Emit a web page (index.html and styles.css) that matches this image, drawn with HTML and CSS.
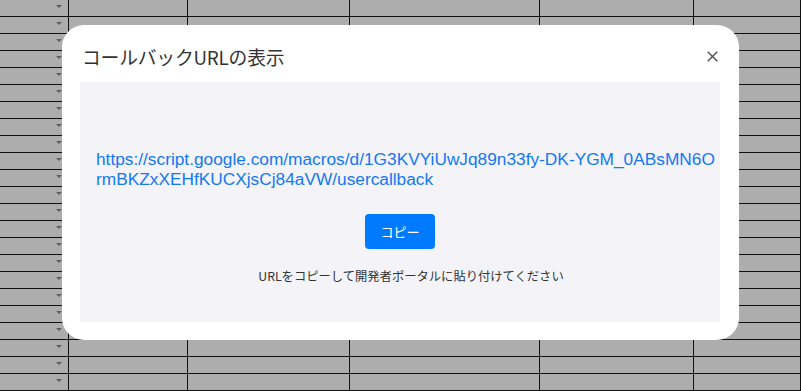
FILE: index.html
```html
<!DOCTYPE html>
<html lang="ja">
<head>
<meta charset="utf-8">
<link rel="stylesheet" href="styles.css">
</head>
<body>
<div class="sheet" id="sheet"></div>
<div class="dialog">
  <div class="dialog-header">
    <h1 class="dialog-title">コールバックURLの表示</h1>
    <button class="close" aria-label="閉じる">
      <svg width="11" height="11" viewBox="0 0 11 11"><path d="M0.7 0.7L10.3 10.3M10.3 0.7L0.7 10.3" stroke="#555" stroke-width="1.5" fill="none"/></svg>
    </button>
  </div>
  <div class="panel">
    <a class="url" href="#">https://script.google.com/macros/d/1G3KVYiUwJq89n33fy-DK-YGM_0ABsMN6OrmBKZxXEHfKUCXjsCj84aVW/usercallback</a>
    <button class="copy">コピー</button>
    <p class="hint">URLをコピーして開発者ポータルに貼り付けてください</p>
  </div>
</div>
<script src="script.js"></script>
</body>
</html>
```
FILE: script.js
```js
var s = document.getElementById('sheet');
var html = '';
for (var r = 0; r < 23; r++) {
  html += '<div class="cell first"><span class="tri"></span></div>';
  for (var c = 0; c < 5; c++) html += '<div class="cell"></div>';
}
s.innerHTML = html;
```
FILE: styles.css
```css
html, body { margin: 0; padding: 0; }
body {
  width: 801px;
  height: 391px;
  overflow: hidden;
  background: #adadad;
  position: relative;
  font-family: "Noto Sans CJK JP", "Liberation Sans", sans-serif;
}
.sheet {
  display: grid;
  grid-template-columns: 69px 119px 162px 190px 154px 1fr;
  grid-auto-rows: 17px;
}
.cell {
  border-right: 1px solid #111;
  border-bottom: 1px solid #111;
  box-sizing: border-box;
  background: #adadad;
}
.cell.first {
  display: flex;
  justify-content: flex-end;
  align-items: flex-start;
  padding: 5px 6px 0 0;
}
.tri {
  width: 0;
  height: 0;
  border-left: 3px solid transparent;
  border-right: 3px solid transparent;
  border-top: 3px solid #5f5f5f;
}
.dialog {
  position: absolute;
  left: 62px;
  top: 25px;
  width: 677px;
  height: 315px;
  background: #fff;
  border-radius: 22px;
  box-sizing: border-box;
  padding: 0 19px 18px 18px;
  display: flex;
  flex-direction: column;
}
.dialog-header {
  height: 57px;
  display: flex;
  align-items: center;
  justify-content: space-between;
  padding: 5px 0 0 2px;
  box-sizing: border-box;
}
.dialog-title {
  margin: 0;
  font-size: 18.8px;
  font-weight: 400;
  color: #333;
  letter-spacing: -0.2px;
}
.close {
  border: 0;
  background: none;
  padding: 0;
  width: 11px;
  height: 11px;
  margin-right: 2px;
  display: flex;
}
.panel {
  flex: 1;
  background: #f3f3f8;
  display: flex;
  flex-direction: column;
  align-items: center;
  padding-top: 67px;
}
.url {
  align-self: flex-start;
  width: 624px;
  margin-left: 16px;
  font-family: "Liberation Sans", Arial, sans-serif;
  font-size: 17.3px;
  line-height: 20px;
  color: #1479f2;
  text-decoration: none;
  word-break: break-all;
}
.copy {
  margin-top: 25px;
  width: 70px;
  height: 35px;
  border: 0;
  border-radius: 4px;
  background: #007aff;
  color: #fff;
  font-family: "Noto Sans CJK JP", sans-serif;
  font-size: 13px;
}
.hint {
  margin: 18px 0 0 22px;
  font-size: 12.3px;
  line-height: 18px;
  color: #333;
}
```
